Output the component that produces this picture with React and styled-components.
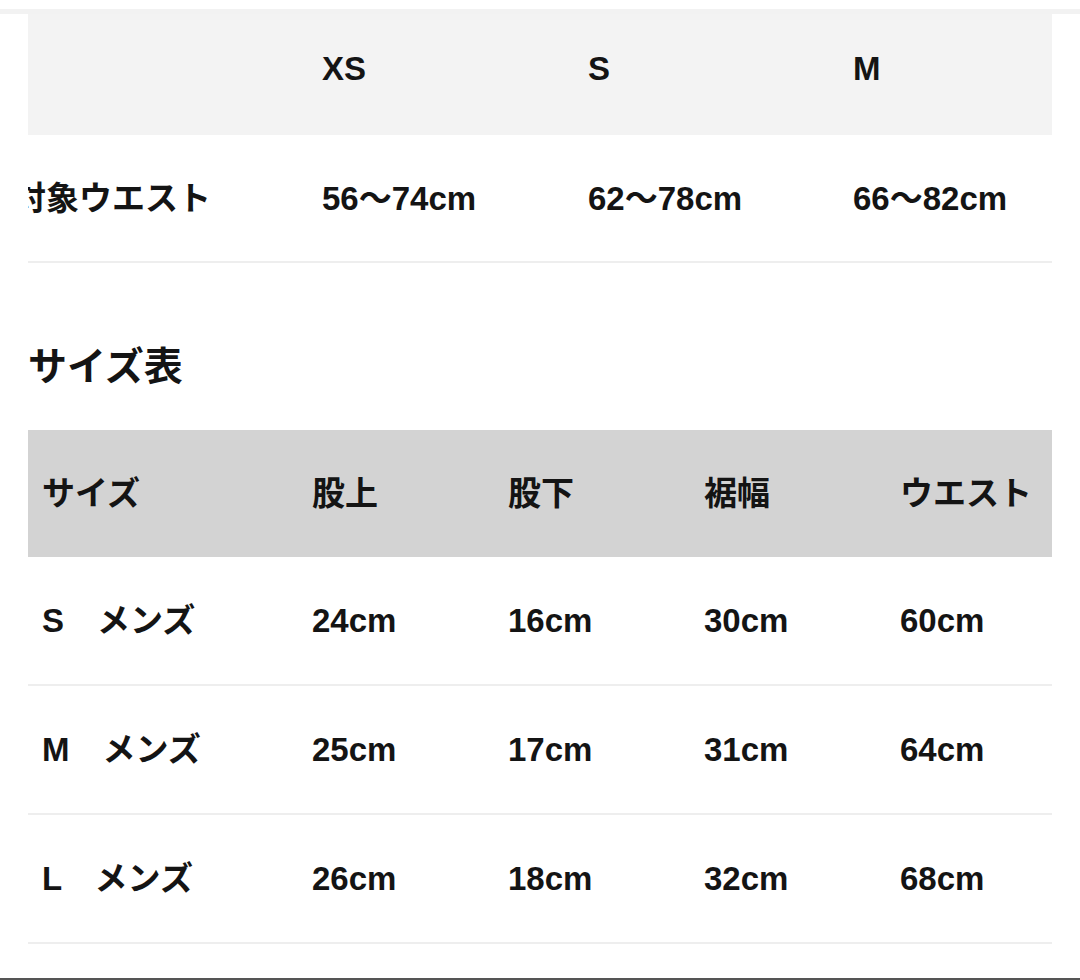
import React from "react";
import styled, { createGlobalStyle } from "styled-components";

const GlobalStyle = createGlobalStyle`
  body {
    margin: 0;
    background: #ffffff;
    color: #141414;
    font-family: "Liberation Sans", "Noto Sans CJK JP", sans-serif;
  }
`;

const Page = styled.div`
  width: 1080px;
  height: 980px;
  padding-top: 9px;
  box-sizing: border-box;
  display: flex;
  flex-direction: column;
  overflow: hidden;
`;

const TopRule = styled.div`
  height: 5px;
  background: #f2f2f2;
`;

const Content = styled.div`
  padding: 0 28px;
  flex: 1;
`;

const ScrollBox = styled.div`
  overflow: hidden;
`;

const Grid = styled.div`
  display: grid;
  grid-template-columns: ${(p) => p.$cols};
  margin-left: ${(p) => -p.$shift}px;
  width: calc(100% + ${(p) => p.$shift}px);
`;

const Cell = styled.div`
  display: flex;
  align-items: center;
  box-sizing: border-box;
  padding: 0 0 ${(p) => p.$lift || 0}px 14px;
  height: ${(p) => p.$height}px;
  background: ${(p) => p.$bg || "transparent"};
  border-bottom: ${(p) => (p.$line ? "2px solid #eeeeee" : "none")};
  font-size: 33px;
  line-height: 1;
  font-weight: 700;
  white-space: nowrap;
`;

const Title = styled.h2`
  margin: 77px 0 37px;
  font-size: 39px;
  line-height: 53px;
  font-weight: 700;
`;

const BottomRule = styled.div`
  height: 2px;
  background: #555555;
`;

const waist = {
  head: ["", "XS", "S", "M"],
  rows: [["対象ウエスト", "56〜74cm", "62〜78cm", "66〜82cm"]],
};

const sizes = {
  head: ["サイズ", "股上", "股下", "裾幅", "ウエスト"],
  rows: [
    ["S\u3000メンズ", "24cm", "16cm", "30cm", "60cm"],
    ["M\u3000メンズ", "25cm", "17cm", "31cm", "64cm"],
    ["L\u3000メンズ", "26cm", "18cm", "32cm", "68cm"],
  ],
};

const Table = ({ data, cols, shift, headBg, headHeight, headLift, rowHeight }) => (
  <ScrollBox>
    <Grid $cols={cols} $shift={shift}>
      {data.head.map((h, i) => (
        <Cell key={"h" + i} $bg={headBg} $height={headHeight} $lift={headLift}>
          {h}
        </Cell>
      ))}
      {data.rows.map((row, r) =>
        row.map((v, i) => (
          <Cell key={r + "-" + i} $height={rowHeight} $line>
            {v}
          </Cell>
        ))
      )}
    </Grid>
  </ScrollBox>
);

export default function App() {
  return (
    <>
      <GlobalStyle />
      <Page>
        <TopRule />
        <Content>
          <Table
            data={waist}
            cols="309px 266px 265px 1fr"
            shift={29}
            headBg="#f3f3f3"
            headHeight={121}
            headLift={12}
            rowHeight={128}
          />
          <Title>サイズ表</Title>
          <Table
            data={sizes}
            cols="270px 196px 196px 196px 1fr"
            shift={0}
            headBg="#d3d3d3"
            headHeight={127}
            headLift={0}
            rowHeight={129}
          />
        </Content>
        <BottomRule />
      </Page>
    </>
  );
}
